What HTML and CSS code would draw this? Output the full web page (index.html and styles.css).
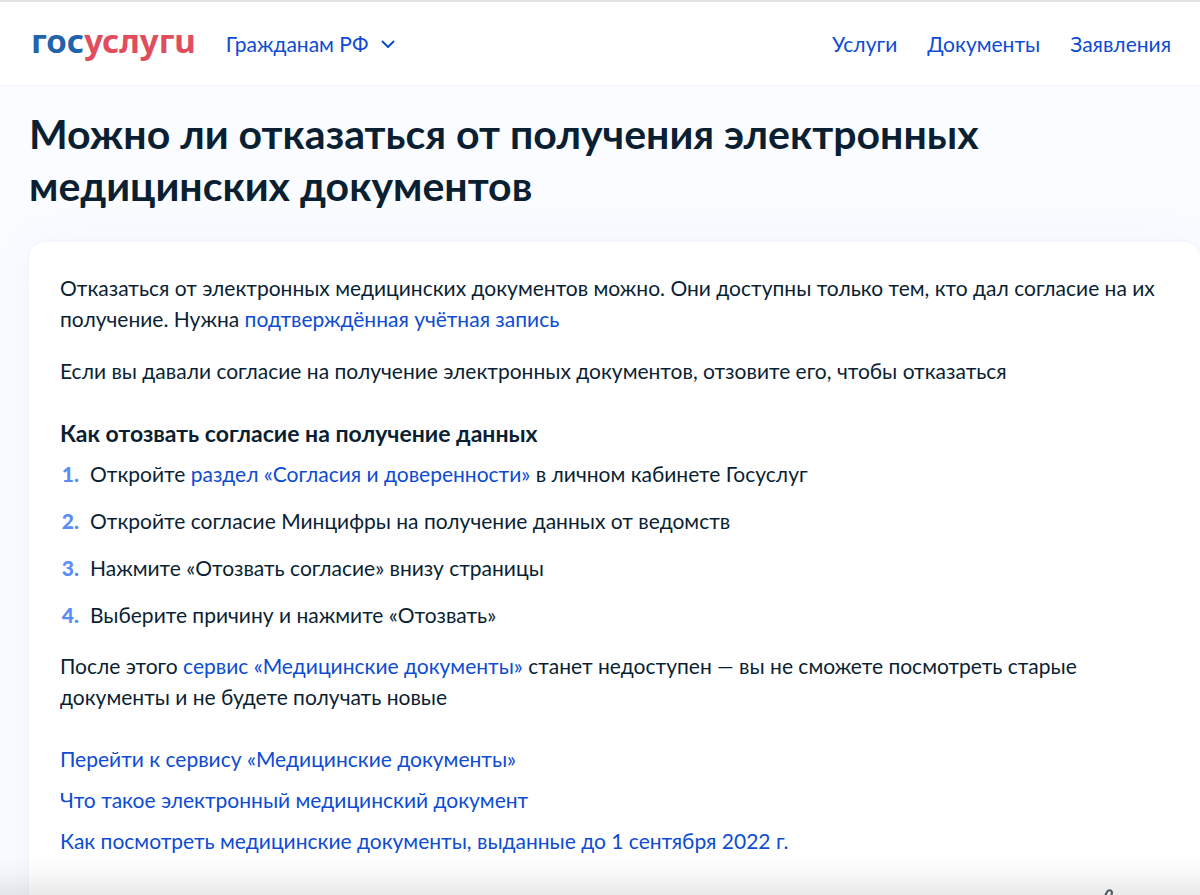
FILE: index.html
```html
<!DOCTYPE html>
<html lang="ru">
<head>
<meta charset="utf-8">
<meta name="viewport" content="width=device-width, initial-scale=1">
<title>Госуслуги</title>
<link rel="stylesheet" href="styles.css">
</head>
<body>
<header class="header">
  <a class="logo" href="#" aria-label="Госуслуги"><span class="logo-blue">гос</span><span class="logo-red">услугu</span></a>
  <button class="audience" type="button">Гражданам РФ
    <svg class="chevron" viewBox="0 0 16 16" aria-hidden="true"><path d="M2.500 5.500 8 11l5.500-5.500"/></svg>
  </button>
  <nav class="nav">
    <a href="#">Услуги</a>
    <a href="#">Документы</a>
    <a href="#">Заявления</a>
  </nav>
</header>
<main class="page">
  <h1 class="title">Можно ли отказаться от получения электронных медицинских документов</h1>
  <article class="card">
    <p class="text">Отказаться от электронных медицинских документов можно. Они доступны только тем, кто дал согласие на их получение. Нужна <a href="#">подтверждённая учётная запись</a></p>
    <p class="text">Если вы давали согласие на получение электронных документов, отзовите его, чтобы отказаться</p>
    <h2 class="subtitle">Как отозвать согласие на получение данных</h2>
    <ol class="steps">
      <li><span>Откройте <a href="#">раздел «Согласия и доверенности»</a> в личном кабинете Госуслуг</span></li>
      <li><span>Откройте согласие Минцифры на получение данных от ведомств</span></li>
      <li><span>Нажмите «Отозвать согласие» внизу страницы</span></li>
      <li><span>Выберите причину и нажмите «Отозвать»</span></li>
    </ol>
    <p class="text">После этого <a href="#">сервис «Медицинские документы»</a> станет недоступен — вы не сможете посмотреть старые документы и не будете получать новые</p>
    <ul class="links">
      <li><a href="#">Перейти к сервису «Медицинские документы»</a></li>
      <li><a href="#">Что такое электронный медицинский документ</a></li>
      <li><a href="#">Как посмотреть медицинские документы, выданные до 1 сентября 2022 г.</a></li>
    </ul>
    <svg class="like" viewBox="0 0 28 28" aria-hidden="true"><path d="M3 12h5v13H3zM8 13l4-5 2-4c1-3 5-2 5 1l-2 7h7c2 0 3 2 2 4l-3 8c-1 2-2 2-4 2H8"/></svg>
  </article>
</main>
<div class="fade"></div>
</body>
</html>
```
FILE: styles.css
```css
* { box-sizing: border-box; }
body {
  margin: 0;
  background: #fafcff;
  color: #0b1f33;
  font: 21px/31px Lato, "Open Sans", sans-serif;
}
a { color: #0d4cd3; text-decoration: none; }
.header {
  display: flex;
  align-items: center;
  height: 86px;
  padding: 0 29px 0 31px;
  background: #fff;
  border-top: 2px solid #e2e4e3;
  border-bottom: 1px solid #f2f4f8;
}
.logo { padding-bottom: 5px; font: 700 33px/40px "Noto Sans", sans-serif; }
.logo-blue { color: #2263ac; }
.logo-red { color: #e04e5d; }
.audience {
  display: flex;
  align-items: center;
  gap: 12px;
  margin-left: 30px;
  padding: 0;
  border: 0;
  background: none;
  color: #0d4cd3;
  font: inherit;
}
.chevron { width: 16px; height: 16px; fill: none; stroke: currentColor; stroke-width: 2; stroke-linecap: round; stroke-linejoin: round; }
.nav { display: flex; gap: 30px; margin-left: auto; }
.page { padding: 22px 0 0 29px; }
.title { margin: 0 160px 30px 0; font-size: 41px; line-height: 52px; }
.card {
  padding: 30px 31px 32px;
  background: #fff;
  border-radius: 16px;
  box-shadow: 0 0 48px #f0f4fd, 0 0 4px #eef2fb;
}
.text { margin: 0 0 21px; }
.subtitle { margin: 32px 0 9px; font-size: 23px; line-height: 31px; }
.steps { display: grid; gap: 16px; margin: 0 0 20px; padding: 0; list-style: none; counter-reset: step; }
.steps li { display: flex; gap: 11px; counter-increment: step; }
.steps li::before { content: counter(step) "."; width: 19px; color: #5a8cf5; font-weight: 900; text-align: right; }
.links { display: grid; gap: 10px; margin: 31px 0 0; padding: 0; list-style: none; }
.like { display: block; width: 28px; height: 28px; margin: 32px 48px 0 auto; fill: none; stroke: #53606e; stroke-width: 2; stroke-linejoin: round; }
.fade {
  position: fixed;
  right: 0;
  bottom: 0;
  left: 0;
  height: 40px;
  background: linear-gradient(transparent, #00000005 40%, #00000015);
  pointer-events: none;
}
```
